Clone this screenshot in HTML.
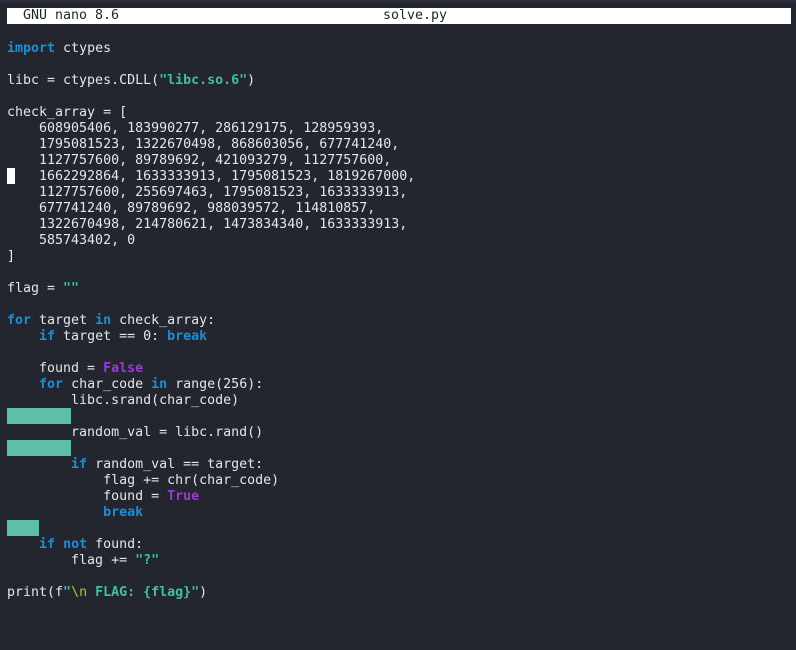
<!DOCTYPE html>
<html><head><style>
html,body{margin:0;padding:0;}
body{width:796px;height:650px;background:#23262f;overflow:hidden;position:relative;font-family:"DejaVu Sans Mono","Liberation Mono",monospace;font-size:13.3px;color:#e6e6e6;}
.top{position:absolute;left:0;top:0;width:796px;height:3px;background:#2c2f3a;}
.bar{position:absolute;left:7px;top:8px;width:784px;height:16px;background:#fff;color:#23262f;}
.bar span{position:absolute;top:0;line-height:16px;white-space:pre;}
.l{position:absolute;left:7px;line-height:16px;white-space:pre;height:16px;margin-top:1px;}
.k{color:#1b8fdc;font-weight:bold;}
.s{color:#3fc0a3;font-weight:bold;}
.p{color:#9a3ad6;font-weight:bold;}
.y{color:#b8c22a;}
.hl{position:absolute;left:7px;height:16px;background:#5dbfa6;}
.cur{position:absolute;left:7px;top:168px;width:8px;height:16px;background:#fff;}
</style></head><body>
<div class="top"></div>
<div class="bar"><span style="left:16px">GNU nano 8.6</span><span style="left:376px">solve.py</span></div>
<div class="l" style="top:40px"><span class="k">import</span> ctypes</div>
<div class="l" style="top:72px">libc = ctypes.CDLL(<span class="s">"libc.so.6"</span>)</div>
<div class="l" style="top:104px">check_array = [</div>
<div class="l" style="top:120px">    608905406, 183990277, 286129175, 128959393,</div>
<div class="l" style="top:136px">    1795081523, 1322670498, 868603056, 677741240,</div>
<div class="l" style="top:152px">    1127757600, 89789692, 421093279, 1127757600,</div>
<div class="l" style="top:168px">    1662292864, 1633333913, 1795081523, 1819267000,</div>
<div class="l" style="top:184px">    1127757600, 255697463, 1795081523, 1633333913,</div>
<div class="l" style="top:200px">    677741240, 89789692, 988039572, 114810857,</div>
<div class="l" style="top:216px">    1322670498, 214780621, 1473834340, 1633333913,</div>
<div class="l" style="top:232px">    585743402, 0</div>
<div class="l" style="top:248px">]</div>
<div class="l" style="top:280px">flag = <span class="s">""</span></div>
<div class="l" style="top:312px"><span class="k">for</span> target <span class="k">in</span> check_array:</div>
<div class="l" style="top:328px">    <span class="k">if</span> target == 0: <span class="k">break</span></div>
<div class="l" style="top:360px">    found = <span class="p">False</span></div>
<div class="l" style="top:376px">    <span class="k">for</span> char_code <span class="k">in</span> range(256):</div>
<div class="l" style="top:392px">        libc.srand(char_code)</div>
<div class="hl" style="top:408px;width:64px"></div>
<div class="l" style="top:424px">        random_val = libc.rand()</div>
<div class="hl" style="top:440px;width:64px"></div>
<div class="l" style="top:456px">        <span class="k">if</span> random_val == target:</div>
<div class="l" style="top:472px">            flag += chr(char_code)</div>
<div class="l" style="top:488px">            found = <span class="p">True</span></div>
<div class="l" style="top:504px">            <span class="k">break</span></div>
<div class="hl" style="top:520px;width:32px"></div>
<div class="l" style="top:536px">    <span class="k">if</span> <span class="k">not</span> found:</div>
<div class="l" style="top:552px">        flag += <span class="s">"?"</span></div>
<div class="l" style="top:584px">print(f<span class="s">"</span><span class="y">\n</span><span class="s"> FLAG: {flag}"</span>)</div>
<div class="cur"></div>
</body></html>
